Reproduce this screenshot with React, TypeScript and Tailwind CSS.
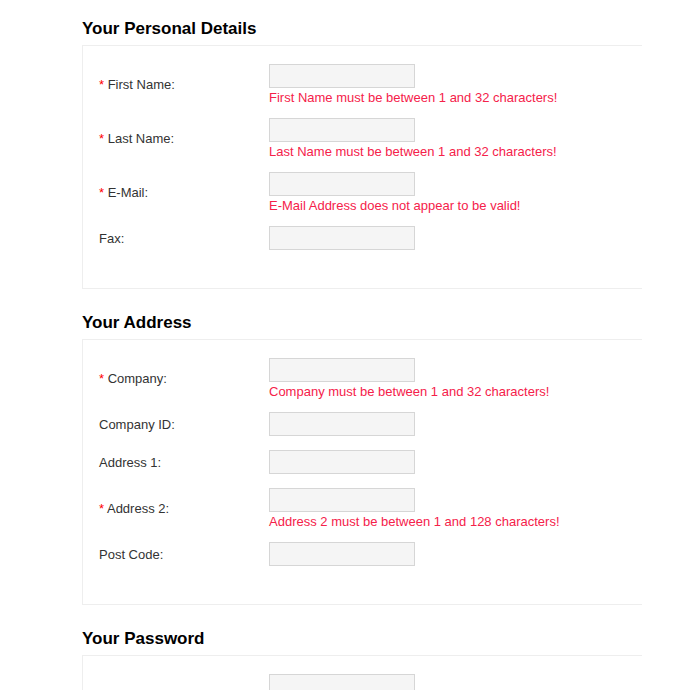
import React from 'react'

type Field = { label: string; required?: boolean; error?: string }

const sections: { title: string; fields: Field[] }[] = [
  {
    title: 'Your Personal Details',
    fields: [
      { label: 'First Name:', required: true, error: 'First Name must be between 1 and 32 characters!' },
      { label: 'Last Name:', required: true, error: 'Last Name must be between 1 and 32 characters!' },
      { label: 'E-Mail:', required: true, error: 'E-Mail Address does not appear to be valid!' },
      { label: 'Fax:' },
    ],
  },
  {
    title: 'Your Address',
    fields: [
      { label: 'Company:', required: true, error: 'Company must be between 1 and 32 characters!' },
      { label: 'Company ID:' },
      { label: 'Address 1:' },
      { label: 'Address 2:', required: true, error: 'Address 2 must be between 1 and 128 characters!' },
      { label: 'Post Code:' },
    ],
  },
  {
    title: 'Your Password',
    fields: [
      { label: 'Password:', required: true, error: 'Password must be between 4 and 20 characters!' },
      { label: 'Password Confirm:', required: true },
    ],
  },
]

function Row({ field }: { field: Field }) {
  return (
    <div className="grid grid-cols-[170px_1fr] items-center py-[7px]">
      <div className="text-[#333]">
        {field.required && <span className="text-[#f00]">* </span>}
        {field.label}
      </div>
      <div>
        <input className="block w-[146px] h-6 border border-[#d6d6d6] bg-[#f5f5f5] px-1 outline-none" />
        {field.error && <div className="text-[#f5214a] leading-[13px] pt-[3px]">{field.error}</div>}
      </div>
    </div>
  )
}

export default function App() {
  return (
    <div className="min-h-[690px] bg-white pl-[82px] pt-[19px] text-[13px] leading-[15px]" style={{ fontFamily: '"Liberation Sans", Arial, sans-serif' }}>
      {sections.map((s) => (
        <div key={s.title}>
          <h2 className="text-[17px] leading-5 font-bold text-black mb-[6px]">{s.title}</h2>
          <div className="w-[560px] border-t border-l border-b border-[#eee] pl-4 pt-[11px] pb-[31px] mb-[24px]">
            {s.fields.map((f) => (
              <Row key={f.label} field={f} />
            ))}
          </div>
        </div>
      ))}
    </div>
  )
}
